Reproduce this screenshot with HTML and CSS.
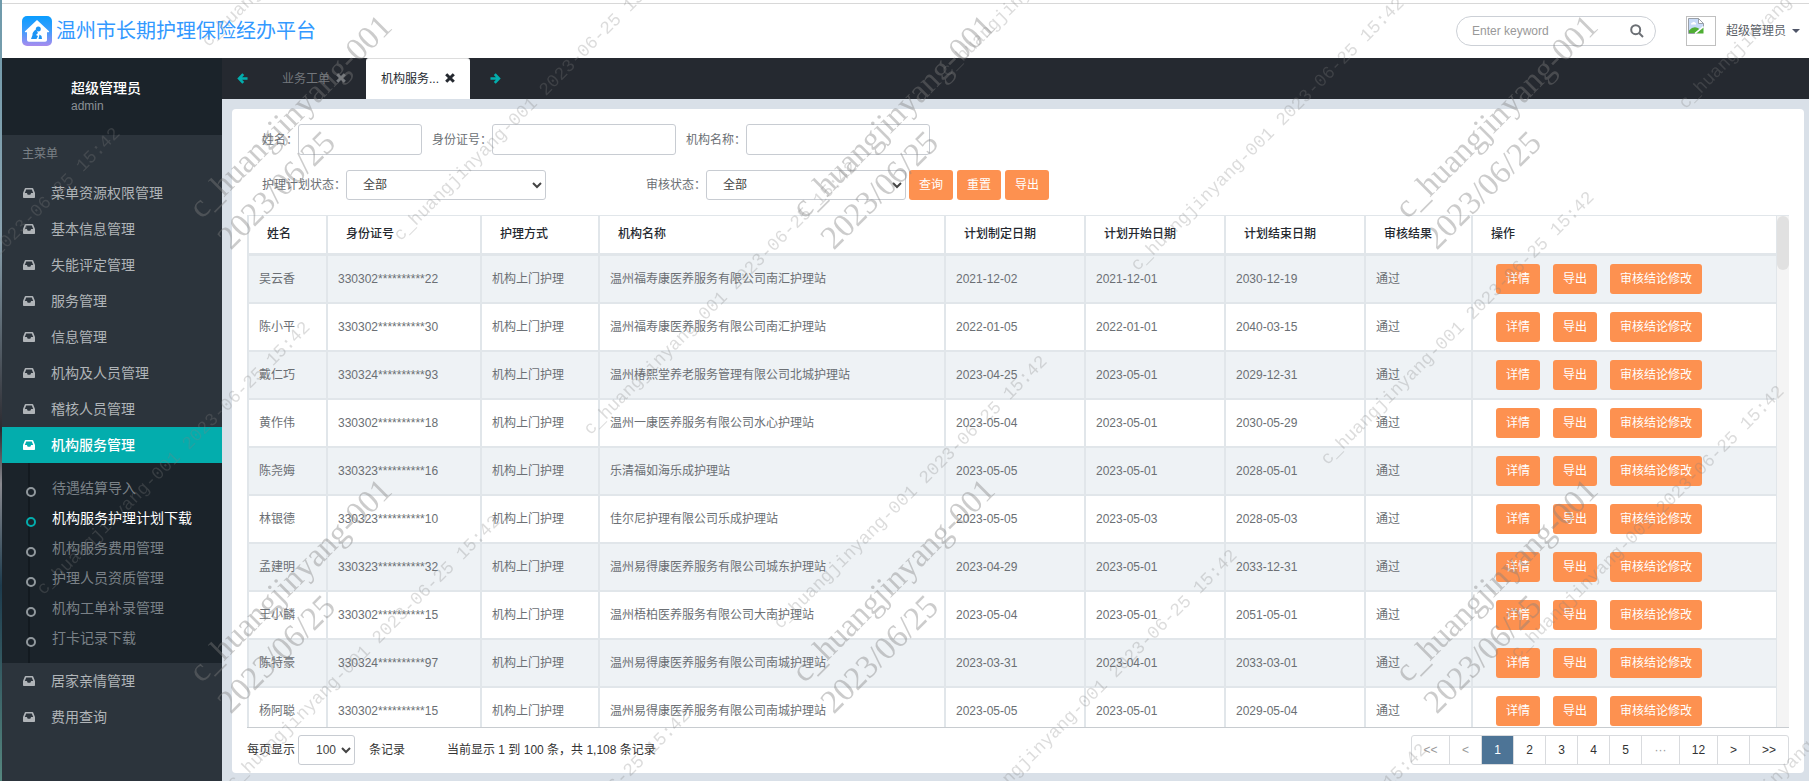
FILE: index.html
```html
<!DOCTYPE html>
<html lang="zh-CN">
<head>
<meta charset="utf-8">
<title>温州市长期护理保险经办平台</title>
<link rel="stylesheet" href="styles.css">
</head>
<body>
<svg class="defs" aria-hidden="true">
  <symbol id="inbox" viewBox="0 0 12 10"><path fill-rule="evenodd" d="M2.6 0h6.8q.6 0 .8.5L12 5v4.2q0 .8-.8.8H.8Q0 10 0 9.200V5L1.800.5Q2 0 2.600 0zM3.200 1.600 1.800 5.100h2.100l.8 1.700h2.600l.8-1.700h2.100L8.800 1.600z"/></symbol>
  <symbol id="arrow-left" viewBox="0 0 11 12"><path d="M6.300 1.200 1.800 6l4.500 4.800M2 6h9" fill="none" stroke="currentColor" stroke-width="2.900"/></symbol>
  <symbol id="arrow-right" viewBox="0 0 11 12"><path d="M4.700 1.200 9.200 6l-4.500 4.800M9 6H0" fill="none" stroke="currentColor" stroke-width="2.900"/></symbol>
  <symbol id="close" viewBox="0 0 10 10"><path d="m1.200 1.200 7.600 7.600m0-7.600L1.200 8.800" fill="none" stroke="currentColor" stroke-width="3"/></symbol>
</svg>
<div class="app">
  <header class="topbar">
    <a class="brand" href="#">
      <svg class="logo" viewBox="0 0 30 30" aria-hidden="true">
        <defs><linearGradient id="lg" x1="0" y1="0" x2="0" y2="1"><stop offset="0" stop-color="#0a9dff"/><stop offset=".5" stop-color="#3d9dfd"/><stop offset="1" stop-color="#a98bee"/></linearGradient></defs>
        <rect width="30" height="30" rx="5" fill="url(#lg)"/>
        <path d="M15 4 27 15.200q.6 1-.6 1H25V24q0 1.800-1.800 1.800H6.800Q5 25.800 5 24v-7.800H3.600q-1.200 0-.6-1z" fill="#fff"/>
        <circle cx="16.300" cy="13" r="2.500" fill="#1c94f5"/>
        <path d="M14 13.500q-4 2.500-3.500 5.500L9 23h5.500l1.500-3-2-1 2-2z" fill="#1c94f5"/>
        <path d="m17.500 18.500 2 1.500.5 3h-3.500z" fill="#1c94f5"/>
      </svg>
      <span>温州市长期护理保险经办平台</span>
    </a>
    <form class="search">
      <input type="text" placeholder="Enter keyword" aria-label="Enter keyword">
      <button type="button" aria-label="Search"><svg viewBox="0 0 14 14"><circle cx="5.700" cy="5.700" r="4.500"/><path d="m9 9 4 4"/></svg></button>
    </form>
    <button class="account" type="button">
      <span class="avatar"><svg viewBox="0 0 16 16"><path d="M.5.5h10l5 5V9l-8 6.500h-7z" fill="#c7daf7" stroke="#9aa0a8"/><path d="M10.500.5v5h5z" fill="#fff" stroke="#9aa0a8"/><path d="M3 6q0-1.500 1.500-1.500Q6 3 7 4.500 8.500 5 8 6.500H3z" fill="#fff"/><path d="M1 15v-2.500Q6 7 11.500 11L7 15z" fill="#4fae33"/><path d="m8 15.500 7.500-6v6z" fill="#4fae33"/><path d="m7 15.500 8.500-7" stroke="#fff" stroke-width="1.500"/></svg></span>
      <span>超级管理员</span><i class="caret"></i>
    </button>
  </header>
  <div class="body">
    <aside class="sidebar">
      <div class="profile"><strong>超级管理员</strong><span>admin</span></div>
      <nav>
        <h2>主菜单</h2>
        <a class="item" href="#"><svg><use href="#inbox"/></svg>菜单资源权限管理</a>
        <a class="item" href="#"><svg><use href="#inbox"/></svg>基本信息管理</a>
        <a class="item" href="#"><svg><use href="#inbox"/></svg>失能评定管理</a>
        <a class="item" href="#"><svg><use href="#inbox"/></svg>服务管理</a>
        <a class="item" href="#"><svg><use href="#inbox"/></svg>信息管理</a>
        <a class="item" href="#"><svg><use href="#inbox"/></svg>机构及人员管理</a>
        <a class="item" href="#"><svg><use href="#inbox"/></svg>稽核人员管理</a>
        <a class="item active" href="#"><svg><use href="#inbox"/></svg>机构服务管理</a>
        <div class="submenu">
          <a href="#">待遇结算导入</a>
          <a class="current" href="#">机构服务护理计划下载</a>
          <a href="#">机构服务费用管理</a>
          <a href="#">护理人员资质管理</a>
          <a href="#">机构工单补录管理</a>
          <a href="#">打卡记录下载</a>
        </div>
        <a class="item" href="#"><svg><use href="#inbox"/></svg>居家亲情管理</a>
        <a class="item" href="#"><svg><use href="#inbox"/></svg>费用查询</a>
      </nav>
    </aside>
    <main>
      <div class="tabs">
        <button class="scroll" type="button" aria-label="向左"><svg><use href="#arrow-left"/></svg></button>
        <button class="tab first" type="button">业务工单<svg><use href="#close"/></svg></button>
        <button class="tab open" type="button">机构服务...<svg><use href="#close"/></svg></button>
        <button class="scroll" type="button" aria-label="向右"><svg><use href="#arrow-right"/></svg></button>
      </div>
      <section class="panel">
        <form class="filters">
          <div class="line">
            <label for="name">姓名：</label><input class="short" id="name" type="text">
            <label for="idno">身份证号：</label><input id="idno" type="text">
            <label for="org">机构名称：</label><input id="org" type="text">
          </div>
          <div class="line">
            <label for="plan">护理计划状态：</label><select id="plan"><option>全部</option></select>
            <label class="audit" for="audit">审核状态：</label><select id="audit"><option>全部</option></select>
            <span class="actions"><button class="btn" type="button">查询</button><button class="btn" type="button">重置</button><button class="btn" type="button">导出</button></span>
          </div>
        </form>
        <div class="grid">
          <div class="scroller">
          <table>
            <colgroup><col class="c-name"><col class="c-id"><col class="c-way"><col class="c-org"><col class="c-date"><col class="c-date"><col class="c-date"><col class="c-result"><col></colgroup>
            <thead><tr><th>姓名</th><th>身份证号</th><th>护理方式</th><th>机构名称</th><th>计划制定日期</th><th>计划开始日期</th><th>计划结束日期</th><th>审核结果</th><th>操作</th></tr></thead>
            <tbody>
              <tr><td>吴云香</td><td>330302**********22</td><td>机构上门护理</td><td>温州福寿康医养服务有限公司南汇护理站</td><td>2021-12-02</td><td>2021-12-01</td><td>2030-12-19</td><td>通过</td><td class="ops"><div><button class="btn" type="button">详情</button><button class="btn" type="button">导出</button><button class="btn" type="button">审核结论修改</button></div></td></tr>
              <tr><td>陈小平</td><td>330302**********30</td><td>机构上门护理</td><td>温州福寿康医养服务有限公司南汇护理站</td><td>2022-01-05</td><td>2022-01-01</td><td>2040-03-15</td><td>通过</td><td class="ops"><div><button class="btn" type="button">详情</button><button class="btn" type="button">导出</button><button class="btn" type="button">审核结论修改</button></div></td></tr>
              <tr><td>戴仁巧</td><td>330324**********93</td><td>机构上门护理</td><td>温州椿熙堂养老服务管理有限公司北城护理站</td><td>2023-04-25</td><td>2023-05-01</td><td>2029-12-31</td><td>通过</td><td class="ops"><div><button class="btn" type="button">详情</button><button class="btn" type="button">导出</button><button class="btn" type="button">审核结论修改</button></div></td></tr>
              <tr><td>黄作伟</td><td>330302**********18</td><td>机构上门护理</td><td>温州一康医养服务有限公司水心护理站</td><td>2023-05-04</td><td>2023-05-01</td><td>2030-05-29</td><td>通过</td><td class="ops"><div><button class="btn" type="button">详情</button><button class="btn" type="button">导出</button><button class="btn" type="button">审核结论修改</button></div></td></tr>
              <tr><td>陈尧娒</td><td>330323**********16</td><td>机构上门护理</td><td>乐清福如海乐成护理站</td><td>2023-05-05</td><td>2023-05-01</td><td>2028-05-01</td><td>通过</td><td class="ops"><div><button class="btn" type="button">详情</button><button class="btn" type="button">导出</button><button class="btn" type="button">审核结论修改</button></div></td></tr>
              <tr><td>林银德</td><td>330323**********10</td><td>机构上门护理</td><td>佳尔尼护理有限公司乐成护理站</td><td>2023-05-05</td><td>2023-05-03</td><td>2028-05-03</td><td>通过</td><td class="ops"><div><button class="btn" type="button">详情</button><button class="btn" type="button">导出</button><button class="btn" type="button">审核结论修改</button></div></td></tr>
              <tr><td>孟建明</td><td>330323**********32</td><td>机构上门护理</td><td>温州易得康医养服务有限公司城东护理站</td><td>2023-04-29</td><td>2023-05-01</td><td>2033-12-31</td><td>通过</td><td class="ops"><div><button class="btn" type="button">详情</button><button class="btn" type="button">导出</button><button class="btn" type="button">审核结论修改</button></div></td></tr>
              <tr><td>王小麟</td><td>330302**********15</td><td>机构上门护理</td><td>温州梧柏医养服务有限公司大南护理站</td><td>2023-05-04</td><td>2023-05-01</td><td>2051-05-01</td><td>通过</td><td class="ops"><div><button class="btn" type="button">详情</button><button class="btn" type="button">导出</button><button class="btn" type="button">审核结论修改</button></div></td></tr>
              <tr><td>陈特豪</td><td>330324**********97</td><td>机构上门护理</td><td>温州易得康医养服务有限公司南城护理站</td><td>2023-03-31</td><td>2023-04-01</td><td>2033-03-01</td><td>通过</td><td class="ops"><div><button class="btn" type="button">详情</button><button class="btn" type="button">导出</button><button class="btn" type="button">审核结论修改</button></div></td></tr>
              <tr><td>杨阿聪</td><td>330302**********15</td><td>机构上门护理</td><td>温州易得康医养服务有限公司南城护理站</td><td>2023-05-05</td><td>2023-05-01</td><td>2029-05-04</td><td>通过</td><td class="ops"><div><button class="btn" type="button">详情</button><button class="btn" type="button">导出</button><button class="btn" type="button">审核结论修改</button></div></td></tr>
            </tbody>
          </table>
          </div>
          <div class="track"><div class="thumb"></div></div>
        </div>
        <footer>
          <label for="size">每页显示</label>
          <select id="size"><option>100</option></select>
          <span class="unit">条记录</span>
          <span class="summary">当前显示 1 到 100 条，共 1,108 条记录</span>
          <nav class="pager">
            <button class="wide" type="button" disabled>&lt;&lt;</button><button type="button" disabled>&lt;</button><button class="on" type="button">1</button><button type="button">2</button><button type="button">3</button><button type="button">4</button><button type="button">5</button><button class="wide" type="button" disabled>···</button><button class="wide" type="button">12</button><button type="button">&gt;</button><button class="wide" type="button">&gt;&gt;</button>
          </nav>
        </footer>
      </section>
    </main>
  </div>
</div>
<div class="marks" aria-hidden="true">
  <span class="big" style="left:194px;top:212px">c_huangjinyang-001</span><span class="big" style="left:223px;top:243px">2023/06/25</span>
  <span class="big" style="left:797px;top:212px">c_huangjinyang-001</span><span class="big" style="left:826px;top:243px">2023/06/25</span>
  <span class="big" style="left:1400px;top:212px">c_huangjinyang-001</span><span class="big" style="left:1429px;top:243px">2023/06/25</span>
  <span class="big" style="left:194px;top:676px">c_huangjinyang-001</span><span class="big" style="left:223px;top:707px">2023/06/25</span>
  <span class="big" style="left:797px;top:676px">c_huangjinyang-001</span><span class="big" style="left:826px;top:707px">2023/06/25</span>
  <span class="big" style="left:1400px;top:676px">c_huangjinyang-001</span><span class="big" style="left:1429px;top:707px">2023/06/25</span>
  <span style="left:-150px;top:398px">c_huangjinyang-001 2023-06-25 15:42</span>
  <span style="left:40px;top:592px">c_huangjinyang-001 2023-06-25 15:42</span>
  <span style="left:230px;top:786px">c_huangjinyang-001 2023-06-25 15:42</span>
  <span style="left:420px;top:980px">c_huangjinyang-001 2023-06-25 15:42</span>
  <span style="left:205px;top:44px">c_huangjinyang-001 2023-06-25 15:42</span>
  <span style="left:397px;top:238px">c_huangjinyang-001 2023-06-25 15:42</span>
  <span style="left:587px;top:432px">c_huangjinyang-001 2023-06-25 15:42</span>
  <span style="left:777px;top:626px">c_huangjinyang-001 2023-06-25 15:42</span>
  <span style="left:967px;top:820px">c_huangjinyang-001 2023-06-25 15:42</span>
  <span style="left:1157px;top:1014px">c_huangjinyang-001 2023-06-25 15:42</span>
  <span style="left:944px;top:74px">c_huangjinyang-001 2023-06-25 15:42</span>
  <span style="left:1134px;top:268px">c_huangjinyang-001 2023-06-25 15:42</span>
  <span style="left:1324px;top:462px">c_huangjinyang-001 2023-06-25 15:42</span>
  <span style="left:1514px;top:656px">c_huangjinyang-001 2023-06-25 15:42</span>
  <span style="left:1704px;top:850px">c_huangjinyang-001 2023-06-25 15:42</span>
  <span style="left:1682px;top:106px">c_huangjinyang-001 2023-06-25 15:42</span>
</div>
</body>
</html>
```
FILE: styles.css
```css
*, *::before { box-sizing: border-box; }
body {
  margin: 0;
  font: 12px/18px "Liberation Sans", "Noto Sans CJK SC", sans-serif;
  color: #6b6f74;
  background: linear-gradient(#6e9aab, #8ba3b0 30%, #2b2a30 55%, #8a8a90 62%, #1d3b4d 75%, #56877f);
}
button, input, select { font: inherit; margin: 0; }
button { padding: 0; border: 0; background: none; color: inherit; cursor: pointer; }
a { color: inherit; text-decoration: none; }
.defs { display: none; }
.app { display: flex; flex-direction: column; height: 100vh; margin-left: 2px; background: #d9e0e8; }

.topbar {
  display: flex; align-items: center; flex: none; height: 58px;
  padding: 4px 9px 0 20px;
  background: linear-gradient(#fff 3px, #d8d8d8 3px, #d8d8d8 4px, #fff 4px);
}
.brand { display: flex; align-items: center; gap: 4px; font-size: 20px; line-height: 30px; color: #3399ff; }
.logo { width: 30px; height: 30px; }
.search { display: flex; align-items: center; width: 200px; height: 30px; margin-left: auto; padding: 0 11px 0 15px; border: 1px solid #ccd0d6; border-radius: 15px; }
.search input { flex: 1; min-width: 0; padding: 0; border: 0; outline: 0; background: none; }
.search input::placeholder { color: #999; }
.search button { display: flex; }
.search svg { width: 14px; height: 14px; fill: none; stroke: #6b6f74; stroke-width: 2; }
.account { display: flex; align-items: center; margin-left: 30px; color: #5a5e66; }
.avatar { width: 30px; height: 30px; margin-right: 10px; padding: 1px; border: 1px solid #c0c0c0; }
.avatar svg { display: block; width: 16px; height: 16px; }
.caret { margin-left: 6px; border: 4px solid transparent; border-top-color: #4f5568; border-bottom: 0; }

.body { display: flex; flex: 1; min-height: 0; }
.sidebar { flex: none; width: 220px; background: #2c343c; color: #b0b4b8; }
.profile { display: flex; flex-direction: column; height: 77px; padding: 20px 0 0 69px; background: #1b232a; color: #8b9196; }
.profile strong { font-size: 14px; line-height: 20px; font-weight: 500; color: #fff; }
.profile span { line-height: 16px; }
.sidebar h2 { margin: 0; padding: 0 20px; font-size: 12px; line-height: 38px; height: 40px; font-weight: 400; color: #7a8086; }
.item { display: flex; align-items: center; height: 36px; padding-left: 21px; font-size: 14px; }
.item svg { width: 12px; height: 10px; margin-right: 16px; fill: currentColor; }
.item.active { background: #03adad; color: #fff; font-weight: 500; }
.submenu { padding: 10px 0; background: linear-gradient(90deg, transparent 26px, #131a20 26px, #131a20 28px, transparent 28px) #1b232a; color: #7a8187; }
.submenu a { display: flex; align-items: center; height: 30px; padding-left: 24px; font-size: 14px; }
.submenu a::before { content: ""; width: 10px; height: 10px; margin: 8px 16px 0 0; border: 2px solid #92999e; border-radius: 50%; background: #1b232a; }
.submenu .current { color: #fff; }
.submenu .current::before { border-color: #03adad; }

main { display: flex; flex: 1; min-width: 0; flex-direction: column; }
.tabs { display: flex; flex: none; height: 41px; padding-left: 15px; background: #252930; color: #73777c; }
.scroll { color: #03adad; }
.scroll svg { display: block; width: 11px; height: 11px; }
.tab { display: flex; align-items: center; padding: 0 15px; line-height: 40px; }
.tab svg { width: 10px; height: 10px; margin: 0 0 2px 6px; }
.tab.first { margin-left: 19px; padding-right: 20px; }
.tab.open { margin-right: 20px; border-top: 1px solid #ddd; border-radius: 3px 3px 0 0; background: #fff; color: #252930; }

.panel { display: flex; flex: 1; flex-direction: column; min-height: 0; margin: 10px 5px 8px 10px; padding: 15px 15px 7px; border-radius: 4px; background: #fff; }
.filters { padding-left: 15px; }
.line { display: flex; align-items: center; margin-bottom: 15px; }
.line input { width: 184px; height: 31px; margin-right: 10px; padding: 0 12px; border: 1px solid #c8ccd2; border-radius: 3px; }
.line .short { width: 124px; }
select { height: 30px; border: 1px solid #c8ccd2; border-radius: 3px; background: #fff; color: #444; }
.line select { width: 200px; padding: 0 2px 0 12px; }
.line .audit { margin-left: 100px; }
.actions { display: flex; gap: 4px; margin-left: 3px; }
.btn { height: 30px; padding: 0 10px; border-radius: 3px; background: #fd9150; color: #fff; white-space: nowrap; }

.grid { display: flex; flex: 1; min-height: 0; overflow: hidden; border-top: 1px solid #e1e6ea; border-bottom: 1px solid #c8ccd0; }
.scroller { flex: 1; min-width: 0; overflow: hidden; border-left: 2px solid #e1e6ea; }
table { width: 100%; table-layout: fixed; border-collapse: separate; border-spacing: 0; border-right: 1px solid #e1e6ea; }
.c-name { width: 79px; }
.c-id { width: 154px; }
.c-way { width: 118px; }
.c-org { width: 346px; }
.c-date { width: 140px; }
.c-result { width: 107px; }
th, td { text-align: left; white-space: nowrap; border-right: 2px solid #e1e6ea; }
th { height: 40px; padding: 0 18px 2px; border-bottom: 3px solid #e1e6ea; color: #252930; font-weight: 500; }
td { height: 48px; padding: 0 10px; border-bottom: 2px solid #e1e6ea; }
th:last-child, td:last-child { border-right: 0; }
tbody tr:nth-child(odd) { background: #eef2f5; }
.ops { padding-left: 23px; }
.ops div { display: flex; gap: 13px; }
.track { flex: none; width: 12px; background: #f4f4f4; }
.thumb { height: 54px; border-radius: 6px; background: #e1e1e1; }

footer { display: flex; flex: none; align-items: center; height: 38px; padding-top: 6px; color: #333; }
footer select { width: 57px; margin-left: 3px; padding: 0 0 0 13px; }
.unit { margin-left: 14px; }
.summary { margin-left: 42px; }
.pager { display: flex; margin-left: auto; border: 1px solid #d9dbde; border-radius: 3px; }
.pager button { width: 32px; height: 28px; border-right: 1px solid #d9dbde; color: #333; }
.pager .wide { width: 38px; }
.pager button:last-child { border-right: 0; }
.pager button:disabled { color: #999; }
.pager .on { background: #4d7496; color: #fff; }

.marks { position: fixed; inset: 0; overflow: hidden; pointer-events: none; }
.marks span { position: absolute; font: 18px/0 "Liberation Mono", monospace; white-space: pre; color: rgba(128, 128, 128, .28); transform: rotate(-45deg); transform-origin: 0 0; }
.marks .big { font: 33px/0 "Liberation Serif", serif; color: rgba(128, 128, 128, .4); }
```
